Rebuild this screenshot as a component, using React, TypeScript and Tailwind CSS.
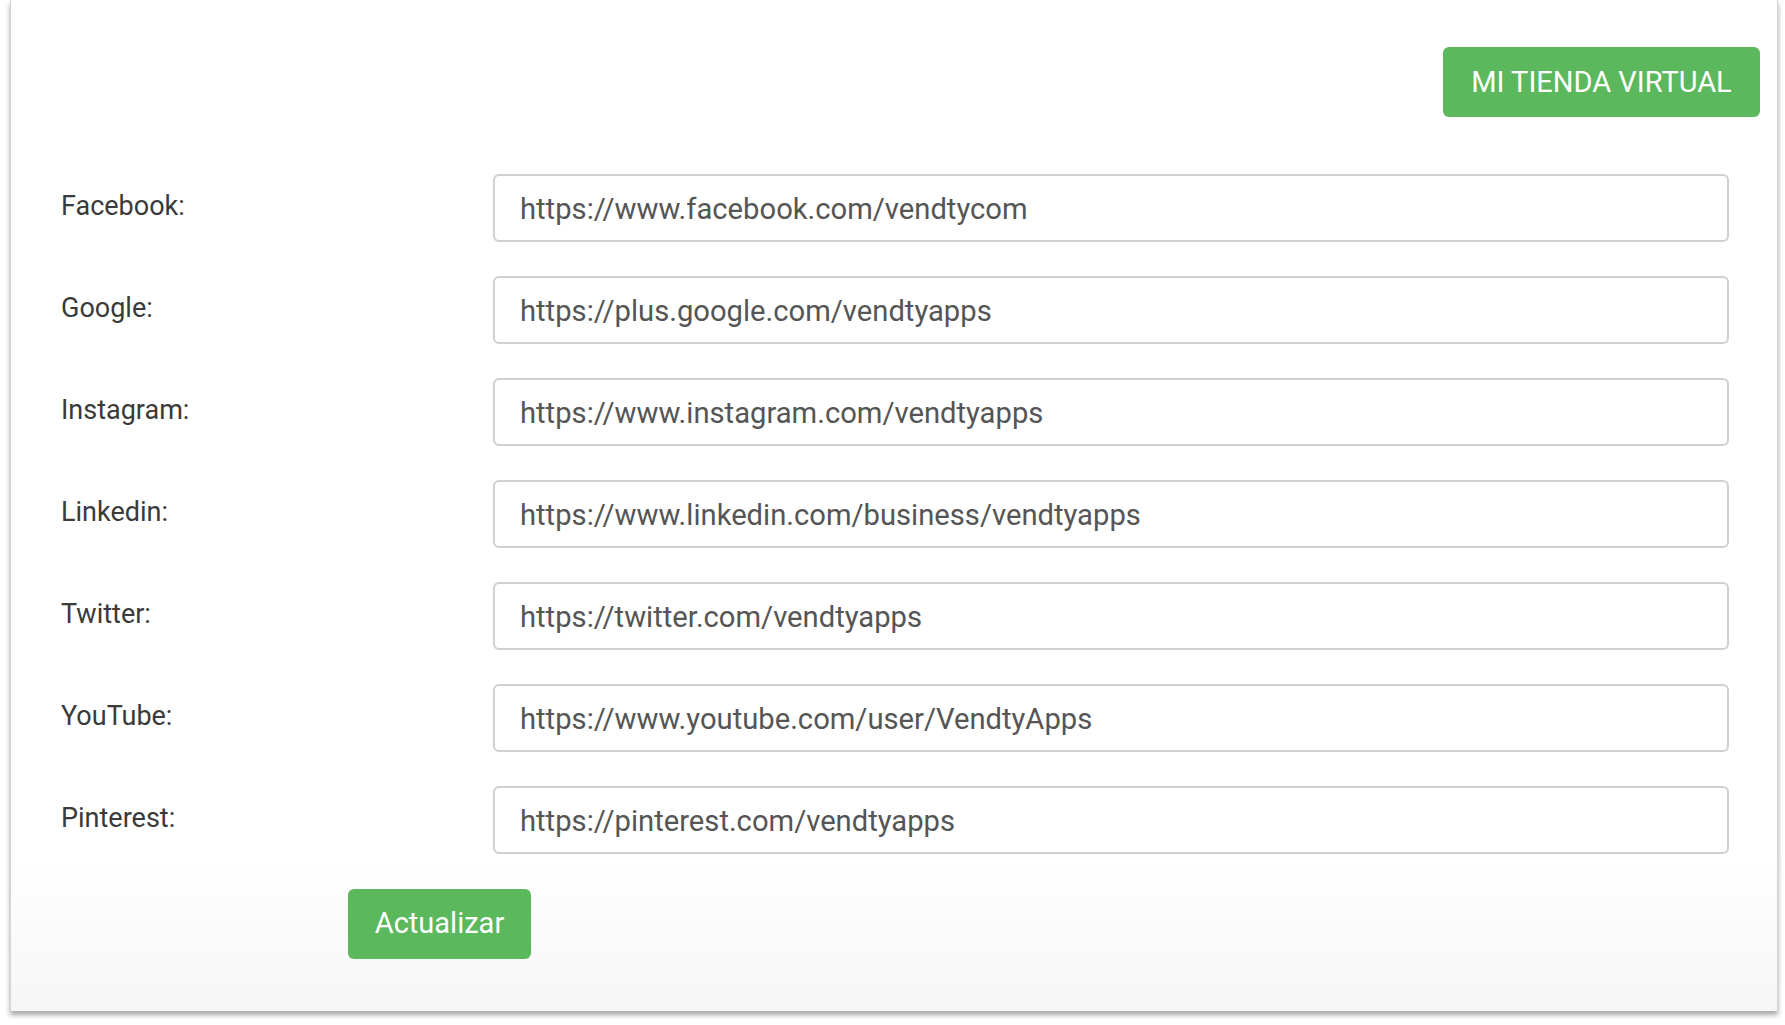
import React from "react";

const rows = [
  { label: "Facebook:", value: "https://www.facebook.com/vendtycom" },
  { label: "Google:", value: "https://plus.google.com/vendtyapps" },
  { label: "Instagram:", value: "https://www.instagram.com/vendtyapps" },
  { label: "Linkedin:", value: "https://www.linkedin.com/business/vendtyapps" },
  { label: "Twitter:", value: "https://twitter.com/vendtyapps" },
  { label: "YouTube:", value: "https://www.youtube.com/user/VendtyApps" },
  { label: "Pinterest:", value: "https://pinterest.com/vendtyapps" },
];

export default function App() {
  return (
    <div className="w-[1785px] h-[1025px] bg-white overflow-hidden" style={{ fontFamily: "Roboto, 'Liberation Sans', sans-serif" }}>
      <div className="ml-[10px] w-[1768px] h-[1011px] bg-gradient-to-b from-white from-85% to-[#f6f6f6] border-l border-r border-[#d4d4d4] shadow-[0_4px_5px_rgba(0,0,0,0.35)] flex flex-col">
        <div className="flex justify-end pt-[47px] pr-[17px]">
          <button className="h-[70px] w-[317px] bg-[#5cb85c] rounded-[6px] text-white text-[29px] pt-[1px]">
            MI TIENDA VIRTUAL
          </button>
        </div>
        <div className="flex flex-col gap-[34px] mt-[57px] pl-[50px] pr-[48px]">
          {rows.map((r) => (
            <div key={r.label} className="flex items-start h-[68px]">
              <div className="w-[432px] pt-[12px] text-[27px] text-[#3a3a3a]">{r.label}</div>
              <div className="flex-1 h-[68px] border-2 border-[#d0d0d0] rounded-[6px] flex items-center pl-[25px] pt-[3px] text-[29.2px] text-[#555]">
                {r.value}
              </div>
            </div>
          ))}
        </div>
        <div className="pl-[337px] mt-[35px]">
          <button className="h-[70px] w-[183px] bg-[#5cb85c] rounded-[6px] text-white text-[29px]">
            Actualizar
          </button>
        </div>
      </div>
    </div>
  );
}
